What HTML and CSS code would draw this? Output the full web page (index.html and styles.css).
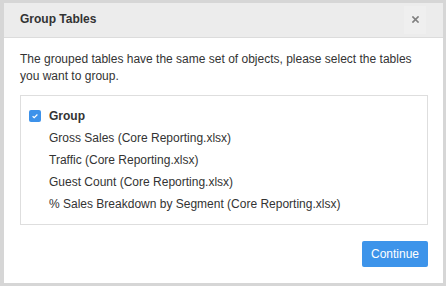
FILE: index.html
```html
<!DOCTYPE html>
<html lang="en">
<head>
  <meta charset="utf-8">
  <title>Group Tables</title>
  <meta name="viewport" content="width=device-width, initial-scale=1.0">
  <link rel="stylesheet" href="styles.css">
</head>
<body>
<main>
  <div class="modal">
    <header class="modal-header">
      <h4 class="modal-title">Group Tables</h4>
      <button class="close" type="button" aria-label="Close">
        <svg width="7" height="7" viewBox="0 0 7 7" aria-hidden="true">
          <path d="M1 1 L6 6 M6 1 L1 6" stroke="#808080" stroke-width="1.7" stroke-linecap="square"/>
        </svg>
      </button>
    </header>
    <section class="modal-body">
      <p class="intro">The grouped tables have the same set of objects, please select the tables you want to group.</p>
      <div class="group-box">
        <label class="group-row">
          <span class="check">
            <svg width="12" height="12" viewBox="0 0 12 12" aria-hidden="true">
              <path d="M3.6 6.2 L5.2 7.7 L8.4 4.5" fill="none" stroke="#fff" stroke-width="1.2"/>
            </svg>
          </span>
          Group
        </label>
        <ul class="tables">
          <li>Gross Sales (Core Reporting.xlsx)</li>
          <li>Traffic (Core Reporting.xlsx)</li>
          <li>Guest Count (Core Reporting.xlsx)</li>
          <li>% Sales Breakdown by Segment (Core Reporting.xlsx)</li>
        </ul>
      </div>
    </section>
    <footer class="modal-footer">
      <button class="btn-primary" type="button">Continue</button>
    </footer>
  </div>
  <div class="drop-hint">Drag and drop files here</div>
</main>
</body>
</html>
```

FILE: styles.css
```css
html {
  box-sizing: border-box;
}

*, *:before, *:after {
  box-sizing: inherit;
}

body {
  margin: 0;
  height: 286px;
  overflow: hidden;
  background: #d6d6d6;
  font-family: 'Liberation Sans', Arial, sans-serif;
  font-size: 12px;
  line-height: 17px;
  color: #333;
}

main {
  padding: 3px 3px 0 4px;
}

.modal {
  width: 439px;
  height: 280px;
  background: #fff;
  display: flex;
  flex-direction: column;
}

.modal-header {
  display: flex;
  align-items: center;
  justify-content: space-between;
  height: 35px;
  padding: 0 17px 1px 16px;
  background: #ececec;
  border-bottom: 1px solid #dcdcdc;
}

.modal-title {
  margin: 0;
  font-size: 12px;
  font-weight: bold;
  color: #333;
}

.close {
  display: flex;
  align-items: center;
  justify-content: center;
  width: 22px;
  height: 28px;
  padding: 0;
  border: 0;
  background: #efefef;
}

.modal-body {
  padding: 13px 15px 0 16px;
}

.intro {
  margin: 0 0 10px;
}

.group-box {
  border: 1px solid #dedede;
  padding: 9px 8px;
}

.group-row {
  display: flex;
  align-items: center;
  gap: 8px;
  line-height: 22px;
  font-weight: bold;
}

.check {
  display: flex;
  width: 12px;
  height: 12px;
  border-radius: 2px;
  background: #3d92ea;
}

.tables {
  list-style: none;
  margin: 0;
  padding: 0 0 0 20px;
  line-height: 22px;
}

.modal-footer {
  display: flex;
  justify-content: flex-end;
  padding: 16px 15px 0 16px;
}

.btn-primary {
  width: 66px;
  height: 26px;
  padding: 0;
  border: 0;
  border-radius: 2px;
  background: #3d94ea;
  color: #fff;
  font-family: 'Liberation Sans', Arial, sans-serif;
  font-size: 12px;
}

.drop-hint {
  margin-top: 3px;
  text-align: center;
  font-size: 20px;
  line-height: 20px;
  color: #c4c4c4;
}
```
